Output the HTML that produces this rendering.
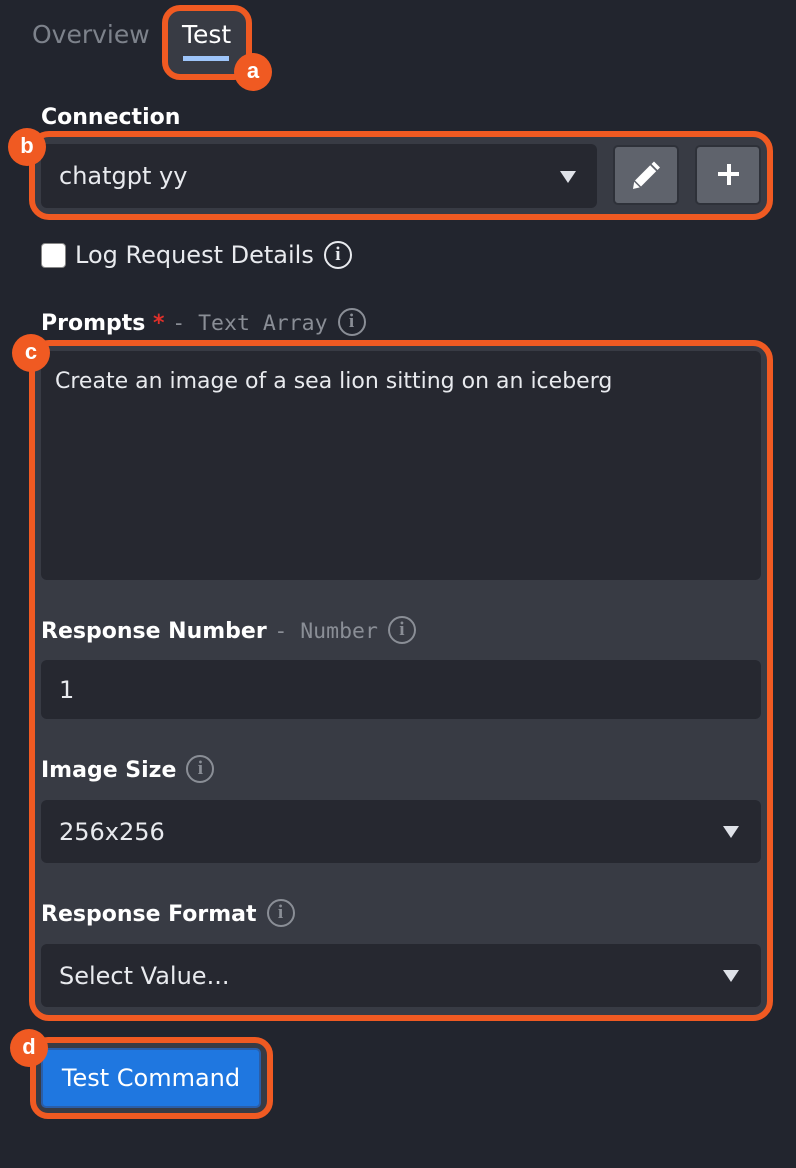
<!DOCTYPE html>
<html><head><meta charset="utf-8"><style>
*{box-sizing:border-box;margin:0;padding:0}
body{width:796px;height:1168px;background:#22252e;font-family:"DejaVu Sans","Liberation Sans",sans-serif;color:#e8eaee;position:relative;overflow:hidden}
.a{position:absolute}
.hl{position:absolute;border:6px solid #f05a22;border-radius:18px;background:#383b44}
.badge{position:absolute;width:38px;height:38px;border-radius:50%;background:#f05a22;color:#fff;font-weight:bold;font-size:22px;text-align:center;line-height:36px;font-family:"Liberation Sans",sans-serif}
.inp{position:absolute;background:#262830;border-radius:6px;font-size:24px;color:#e8eaee;padding-left:18px;display:flex;align-items:center}
.lbl{position:absolute;font-weight:bold;font-size:22px;color:#fff;white-space:nowrap}
.mono{font-family:"DejaVu Sans Mono","Liberation Mono",monospace;font-weight:normal;color:#8a8e96;font-size:21.5px}
.info{display:inline-block;width:28px;height:28px;border:2px solid #8a8e96;border-radius:50%;color:#8a8e96;font-family:"Liberation Serif",serif;font-weight:bold;font-size:19px;text-align:center;line-height:24px;vertical-align:3px;margin-left:10px}
.tri{position:absolute;width:0;height:0;border-left:8px solid transparent;border-right:8px solid transparent;border-top:12px solid #dfe2e8}
.btn{position:absolute;background:#5f636c;border-radius:5px;border:2px solid #2e3139}
</style></head><body>
<div class="a" style="left:32px;top:20px;font-size:25px;color:#7d828b">Overview</div>
<div class="hl" style="left:162px;top:5px;width:90px;height:75px"></div>
<div class="a" style="left:182px;top:20px;font-size:25px;color:#fff">Test</div>
<div class="a" style="left:183px;top:56px;width:46px;height:5px;background:#9ec5fa"></div>
<div class="badge" style="left:234px;top:53px">a</div>

<div class="lbl" style="left:41px;top:105px">Connection</div>
<div class="hl" style="left:29px;top:131px;width:744px;height:89px;border-radius:20px"></div>
<div class="inp" style="left:41px;top:144px;width:556px;height:64px">chatgpt yy</div>
<div class="tri" style="left:560px;top:171px"></div>
<div class="btn" style="left:613px;top:145px;width:66px;height:60px"></div>
<svg class="a" style="left:631px;top:159px" width="32" height="32" viewBox="0 0 32 32"><path d="M23 2.5l6 6-2.5 2.5-6-6z" fill="#fff"/><path d="M19.2 6.3l6 6L10 27.5l-6-6z" fill="#fff"/><path d="M3.2 22.8l5.6 5.6L2 30z" fill="#fff"/></svg>
<div class="btn" style="left:695px;top:145px;width:66px;height:60px"></div>
<div class="a" style="left:718px;top:172px;width:21px;height:4px;background:#fff"></div>
<div class="a" style="left:726.5px;top:164px;width:4px;height:21px;background:#fff"></div>
<div class="badge" style="left:8px;top:128px">b</div>

<div class="a" style="left:41px;top:243px;width:25px;height:25px;background:#fff;border-radius:4px;border:1px solid #888"></div>
<div class="a" style="left:75px;top:241px;font-size:24px;color:#e8eaee">Log Request Details<span class="info" style="border-color:#e8eaee;color:#e8eaee">i</span></div>

<div class="lbl" style="left:41px;top:308px">Prompts <span style="color:#e0302a">*</span> <span class="mono">- Text Array</span><span class="info">i</span></div>
<div class="hl" style="left:29px;top:340px;width:744px;height:681px;border-radius:20px"></div>
<div class="a" style="left:41px;top:351px;width:720px;height:229px;background:#262830;border-radius:6px;padding:18px 14px;font-size:22px">Create an image of a sea lion sitting on an iceberg</div>
<div class="badge" style="left:12px;top:334px">c</div>

<div class="lbl" style="left:41px;top:616px">Response Number <span class="mono">- Number</span><span class="info">i</span></div>
<div class="inp" style="left:41px;top:660px;width:720px;height:59px">1</div>
<div class="lbl" style="left:41px;top:755px">Image Size<span class="info">i</span></div>
<div class="inp" style="left:41px;top:800px;width:720px;height:63px">256x256</div>
<div class="tri" style="left:723px;top:826px"></div>
<div class="lbl" style="left:41px;top:899px">Response Format<span class="info">i</span></div>
<div class="inp" style="left:41px;top:944px;width:720px;height:63px">Select Value...</div>
<div class="tri" style="left:723px;top:970px"></div>

<div class="hl" style="left:30px;top:1037px;width:243px;height:82px;border-radius:18px"></div>
<div class="a" style="left:41px;top:1048px;width:220px;height:60px;background:#1f77e0;border:2px solid #2a5ea8;border-radius:5px;color:#fff;font-size:24px;display:flex;align-items:center;justify-content:center">Test Command</div>
<div class="badge" style="left:10px;top:1029px">d</div>
</body></html>
